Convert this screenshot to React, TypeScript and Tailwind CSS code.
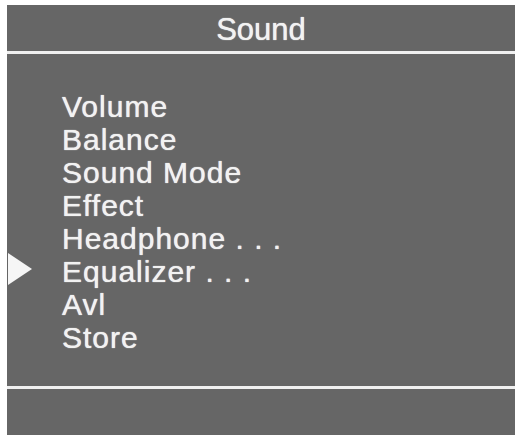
import React from "react";

const items = [
  "Volume",
  "Balance",
  "Sound Mode",
  "Effect",
  "Headphone . . .",
  "Equalizer . . .",
  "Avl",
  "Store",
];

export default function App() {
  return (
    <div
      className="w-[520px] h-[437px] bg-white pl-[7px] pt-[5px]"
      style={{ fontFamily: '"Liberation Sans", Arial, sans-serif' }}
    >
      <div className="w-[508px] h-[430px] bg-[#666666] flex flex-col">
        <div className="h-[46px] flex items-center justify-center text-[31px] leading-none text-[#f2f2f2] pt-[2px] [text-shadow:0_0_1px_#ffffff]">
          Sound
        </div>
        <div className="h-[3px] bg-[#f0f0f0]" />
        <div className="h-[332px] pt-[36px] flex flex-col">
          {items.map((t, i) => (
            <div key={t} className="flex items-center h-[33px]">
              <div className="w-[55px] pl-[1px] flex items-center">
                {i === 5 && (
                  <svg width="24" height="32" viewBox="0 0 24 32" className="mb-[6px]">
                    <polygon points="0,0 24,16 0,32" fill="#f6f6f6" />
                  </svg>
                )}
              </div>
              <span className="text-[30px] leading-[33px] tracking-[1px] text-[#f2f2f2] whitespace-pre [text-shadow:0_0_1px_#ffffff]">
                {t}
              </span>
            </div>
          ))}
        </div>
        <div className="h-[3px] bg-[#f0f0f0]" />
        <div className="flex-1" />
      </div>
    </div>
  );
}
